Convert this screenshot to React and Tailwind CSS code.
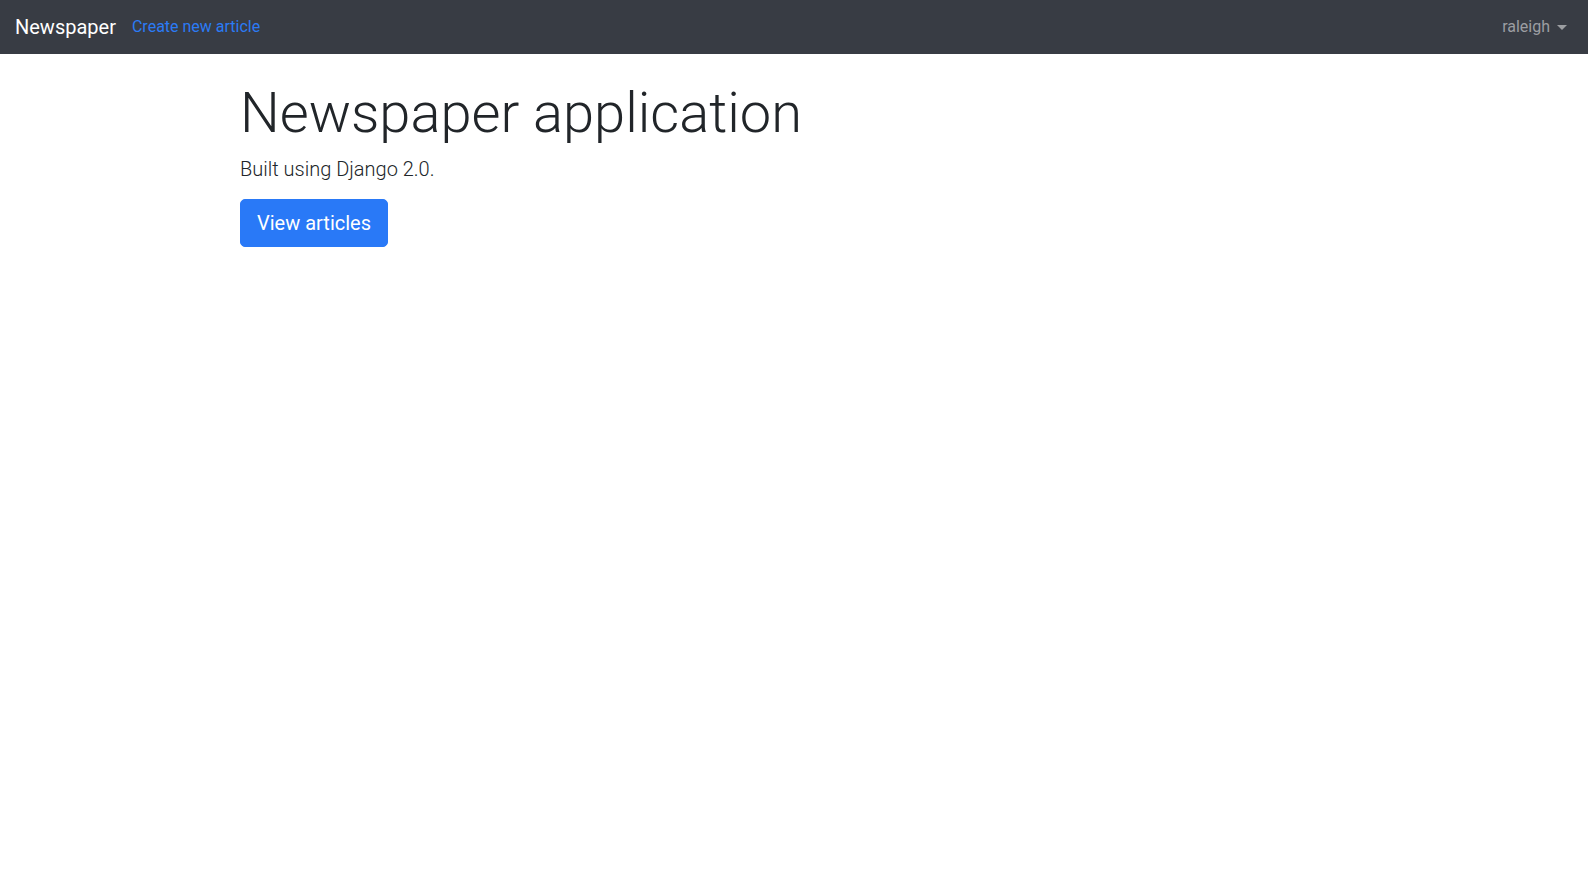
import React from 'react';

const Navbar = () => (
  <nav className="h-[54px] bg-[#383c44] flex items-center justify-between px-[15px]">
    <div className="flex items-center">
      <a href="#" className="text-[20px] leading-[30px] text-white mr-4">Newspaper</a>
      <a href="#" className="text-[16px] leading-6 text-[#2b7bf5]">Create new article</a>
    </div>
    <a href="#" className="flex items-center text-[16px] leading-6 text-[#9c9ea2] pr-[6px]">
      raleigh
      {/* dropdown caret */}
      <span className="ml-[7px] mt-[1px] w-0 h-0 border-t-[5px] border-l-[5px] border-r-[5px] border-t-[#9c9ea2] border-l-transparent border-r-transparent" />
    </a>
  </nav>
);

export default function App() {
  return (
    <div className="min-h-screen bg-white font-['Roboto',sans-serif] text-[#212529]">
      <Navbar />
      <main className="max-w-[1140px] mx-auto pl-[16px] pr-[15px] pt-[26px]">
        <h1 className="text-[56px] leading-[1.2] font-light mb-[7px]">Newspaper application</h1>
        <p className="text-[20px] leading-[30px] font-light mb-[15px]">Built using Django 2.0.</p>
        <a href="#" className="inline-block bg-[#2979f7] text-white text-[20px] leading-[30px] px-4 py-2 border border-[#2979f7] rounded-[5px]">
          View articles
        </a>
      </main>
    </div>
  );
}
